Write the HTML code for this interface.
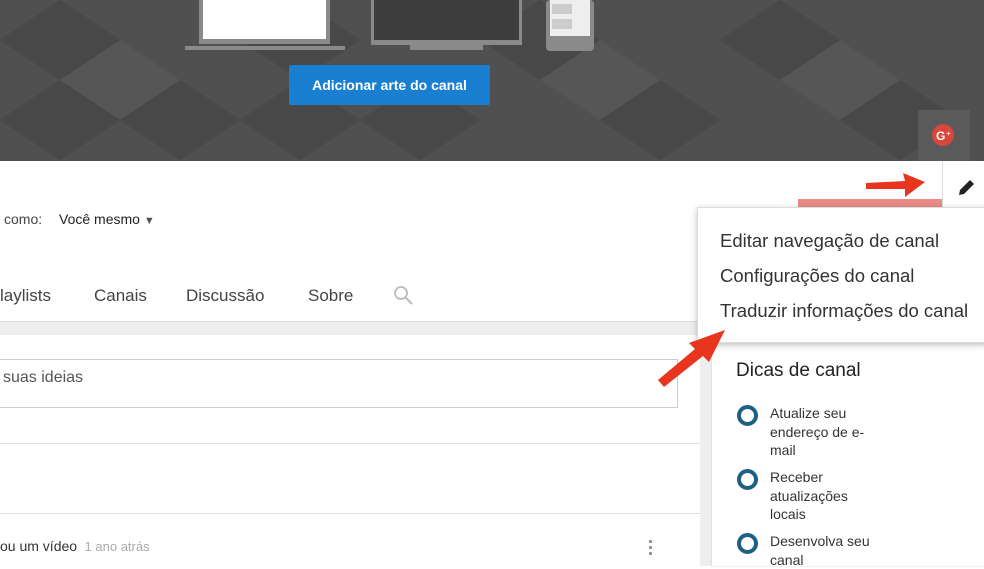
<!DOCTYPE html>
<html><head><meta charset="utf-8"><style>
*{margin:0;padding:0;box-sizing:border-box}
body{width:984px;height:566px;overflow:hidden;position:relative;background:#fff;font-family:"Liberation Sans",Arial,sans-serif;color:#222}
.abs{position:absolute}
.tab{position:absolute;top:286px;font-size:17px;color:#444;white-space:nowrap}
</style></head><body>
<!-- banner -->
<svg class="abs" style="left:0;top:0" width="984" height="161">
<rect width="984" height="161" fill="#505050"/>
<g fill="#484848">
<polygon points="0,40 60,0 120,40 60,80"/><polygon points="120,120 180,80 240,120 180,160"/>
<polygon points="240,40 300,0 360,40 300,80"/><polygon points="360,120 420,80 480,120 420,160"/>
<polygon points="480,40 540,0 600,40 540,80"/><polygon points="600,120 660,80 720,120 660,160"/>
<polygon points="720,40 780,0 840,40 780,80"/><polygon points="840,120 900,80 960,120 900,160"/>
<polygon points="0,120 60,80 120,120 60,160"/><polygon points="240,120 300,80 360,120 300,160"/>
</g>
<g fill="#565656">
<polygon points="60,80 120,40 180,80 120,120"/><polygon points="540,80 600,40 660,80 600,120"/>
<polygon points="780,80 840,40 900,80 840,120"/>
</g>
<rect x="199" y="0" width="131" height="44" fill="#8a8a8a"/>
<rect x="203" y="0" width="123" height="39" fill="#fff"/>
<rect x="185" y="46" width="160" height="4" fill="#8a8a8a"/>
<rect x="371" y="0" width="151" height="45" fill="#8a8a8a"/>
<rect x="374" y="0" width="145" height="40" fill="#3e3e3e"/>
<rect x="410" y="45" width="73" height="5" fill="#8a8a8a"/>
<rect x="546" y="0" width="48" height="51" rx="4" fill="#8a8a8a"/>
<rect x="550" y="0" width="40" height="36" fill="#eee"/>
<rect x="552" y="4" width="20" height="10" fill="#ccc"/><rect x="552" y="19" width="20" height="10" fill="#ccc"/>
<rect x="918" y="110" width="52" height="51" fill="#5a5a5a"/>
<circle cx="943" cy="135" r="11" fill="#d9463b"/>
<text x="936" y="140" font-size="12" font-weight="bold" fill="#fff" font-family="Liberation Sans">G</text>
<text x="946" y="136" font-size="8" fill="#fff" font-family="Liberation Sans">+</text>
</svg>
<div class="abs" style="left:289px;top:65px;width:201px;height:40px;background:#1a7fd0;border-radius:2px;color:#fff;font-weight:bold;font-size:14px;line-height:40px;text-align:center">Adicionar arte do canal</div>
<!-- header area -->
<div class="abs" style="left:4px;top:211px;font-size:14px;color:#444">como:</div>
<div class="abs" style="left:59px;top:211px;font-size:14px;color:#222">Você mesmo <span style="font-size:11px;color:#555">▼</span></div>
<div class="tab" style="left:0">laylists</div>
<div class="tab" style="left:94px">Canais</div>
<div class="tab" style="left:186px">Discussão</div>
<div class="tab" style="left:308px">Sobre</div>
<svg class="abs" style="left:393px;top:285px" width="22" height="22"><circle cx="8" cy="8" r="6" fill="none" stroke="#bbb" stroke-width="1.8"/><line x1="12" y1="12" x2="19" y2="19" stroke="#bbb" stroke-width="2"/></svg>
<div class="abs" style="left:0;top:321px;width:984px;height:14px;background:#eee;border-top:1px solid #ddd"></div>
<div class="abs" style="left:700px;top:321px;width:12px;height:245px;background:#eee"></div>
<div class="abs" style="left:712px;top:321px;width:272px;height:245px;background:#fff;box-shadow:0 0 2px rgba(0,0,0,.15)"></div>
<!-- content -->
<div class="abs" style="left:-2px;top:359px;width:680px;height:49px;border:1px solid #ccc;font-size:16px;color:#555;padding:9px 0 0 4px">suas ideias</div>
<div class="abs" style="left:0;top:443px;width:700px;height:1px;background:#ddd"></div>
<div class="abs" style="left:0;top:513px;width:700px;height:1px;background:#ddd"></div>
<div class="abs" style="left:0;top:538px;font-size:14px;color:#333">ou um vídeo <span style="color:#aaa;font-size:13px">&nbsp;1 ano atrás</span></div>
<div class="abs" style="left:649px;top:540px;width:3px;height:3px;background:#999;box-shadow:0 6px #999,0 12px #999"></div>
<!-- right card -->
<div class="abs" style="left:736px;top:360px;font-size:19px;color:#222">Dicas de canal</div>
<div class="abs" style="left:737px;top:404px;font-size:14px;line-height:18.5px;color:#333">
<div style="position:relative;padding-left:33px;height:64px"><span style="position:absolute;left:0;top:1px;width:21px;height:21px;border:4px solid #1d5f86;border-radius:50%"></span>Atualize seu<br>endereço de e-<br>mail</div>
<div style="position:relative;padding-left:33px;height:64px"><span style="position:absolute;left:0;top:1px;width:21px;height:21px;border:4px solid #1d5f86;border-radius:50%"></span>Receber<br>atualizações<br>locais</div>
<div style="position:relative;padding-left:33px"><span style="position:absolute;left:0;top:1px;width:21px;height:21px;border:4px solid #1d5f86;border-radius:50%"></span>Desenvolva seu<br>canal</div>
</div>
<!-- top-right controls -->
<div class="abs" style="left:798px;top:199px;width:145px;height:8px;background:#e98b86"></div>
<div class="abs" style="left:942px;top:161px;width:42px;height:48px;background:#fff;border-left:1px solid #ddd"></div>
<svg class="abs" style="left:956px;top:176px" width="22" height="22"><path d="M3 19 L4 14 L14 4 L18 8 L8 18 Z" fill="#222"/></svg>
<!-- dropdown -->
<div class="abs" style="left:697px;top:207px;width:290px;height:136px;background:#fff;border:1px solid #ddd;box-shadow:0 2px 6px rgba(0,0,0,.25);font-size:18.5px;color:#333;padding-top:15px;padding-left:22px;line-height:35px;white-space:nowrap">
<div>Editar navegação de canal</div><div>Configurações do canal</div><div>Traduzir informações do canal</div></div>
<!-- arrows -->
<svg class="abs" style="left:0;top:0" width="984" height="566">
<polygon points="866,183 905,181 903,173 925,182 905,197 905,189 866,189" fill="#e8361e"/>
<polygon points="658,380 695,349 689,343 725,330 709,362 703,356 664,387" fill="#e8361e"/>
</svg>
</body></html>
